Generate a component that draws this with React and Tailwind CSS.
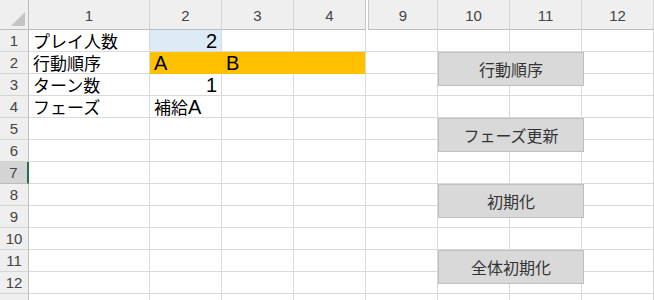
import React from "react";

const colW = [121, 72, 72, 72, 72, 72, 72, 72];
const colLabels = ["1", "2", "3", "4", "9", "10", "11", "12"];
const latinCls = "font-['Liberation_Sans','Noto_Sans_CJK_JP',sans-serif] text-[20px]";

const cells = {
  "1-0": { t: "プレイ人数" },
  "1-1": { t: "2", right: true, bg: "bg-[#ddebf7]" },
  "2-0": { t: "行動順序" },
  "2-1": { t: "A", bg: "bg-[#ffc000]", latin: true },
  "2-2": { t: "B", bg: "bg-[#ffc000]", latin: true },
  "2-3": { t: "", bg: "bg-[#ffc000]" },
  "3-0": { t: "ターン数" },
  "3-1": { t: "1", right: true },
  "4-0": { t: "フェーズ" },
  "4-1": {
    t: (
      <>
        補給<span className={latinCls}>A</span>
      </>
    ),
  },
};

const buttons = [
  { t: "行動順序", top: "top-[52px]" },
  { t: "フェーズ更新", top: "top-[118px]" },
  { t: "初期化", top: "top-[184px]" },
  { t: "全体初期化", top: "top-[250px]" },
];

export default function App() {
  const rows = Array.from({ length: 13 }, (_, i) => i + 1);
  return (
    <div className="relative w-[654px] h-[300px] overflow-hidden bg-white font-['Noto_Sans_CJK_JP','Liberation_Sans',sans-serif]">
      <div className="grid grid-cols-[29px_121px_72px_72px_72px_72px_72px_72px_72px] grid-rows-[30px_repeat(13,22px)]">
        <div className="relative bg-[#efefef] border-r border-b border-[#bdbdbd]">
          <div className="absolute right-[3px] bottom-[3px] w-0 h-0 border-l-[14px] border-l-transparent border-b-[14px] border-b-[#c4c4c4]" />
        </div>
        {colLabels.map((l, i) => (
          <div
            key={l}
            className={
              "flex items-center justify-center bg-[#efefef] border-b border-[#bdbdbd] text-[15px] text-[#444] leading-none font-['Liberation_Sans',sans-serif] " +
              (i === 3
                ? "border-r border-r-[#c6c6c6] "
                : i === 4
                ? "ml-[2px] border-l border-l-[#c6c6c6] border-r border-r-[#d4d4d4] "
                : "border-r border-r-[#d4d4d4] ")
            }
          >
            <span className="pt-[2px]">{l}</span>
          </div>
        ))}
        {rows.map((r) => (
          <React.Fragment key={r}>
            <div
              className={
                "flex items-center justify-center text-[15px] leading-none text-[#444] border-b font-['Liberation_Sans',sans-serif] " +
                (r === 7
                  ? "bg-[#d4d4d4] border-b-[#bdbdbd] border-r-2 border-r-[#217346]"
                  : "bg-[#efefef] border-b-[#d4d4d4] border-r border-r-[#bdbdbd]")
              }
            >
              {r}
            </div>
            {colW.map((_, c) => {
              const cell = cells[`${r}-${c}`] || {};
              const isOrange = cell.bg === "bg-[#ffc000]";
              const noRight = isOrange && c < 3;
              return (
                <div
                  key={c}
                  className={
                    "flex items-center whitespace-nowrap text-black leading-[18px] border-b " +
                    (cell.latin || cell.right ? latinCls + " " : "text-[17px] ") +
                    (cell.bg ? cell.bg + " " : "") +
                    (noRight ? "" : "border-r ") +
                    (cell.right ? "justify-end pr-[4px] " : "pl-[4px] ") +
                    (isOrange ? "border-[#ffc000] border-r-[#d9d9d9]" : "border-[#d9d9d9]")
                  }
                >
                  {cell.t}
                </div>
              );
            })}
          </React.Fragment>
        ))}
      </div>
      {buttons.map((b) => (
        <div
          key={b.t}
          className={
            "absolute left-[438px] w-[146px] h-[34px] flex items-center justify-center bg-[#d9d9d9] border border-[#bfbfbf] text-[16px] leading-none text-[#333] " +
            b.top
          }
        >
          {b.t}
        </div>
      ))}
    </div>
  );
}
